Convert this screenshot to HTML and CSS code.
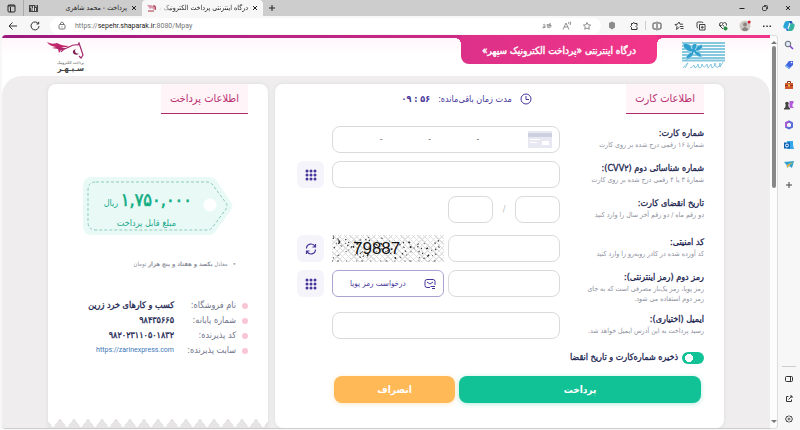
FILE: index.html
```html
<!DOCTYPE html>
<html lang="fa">
	<head>
		<meta charset="utf-8">
		<meta name="viewport" content="width=device-width,initial-scale=1">
		<title>درگاه اینترنتی پرداخت الکترونیک سپهر</title>
		<link rel="stylesheet" href="styles.css">
	</head>
	<body>
		<svg class="symbols">
			<symbol id="keypad" viewBox="0 0 12 12"><g fill="#46359a"><circle cx="2" cy="2" r="1.5"/><circle cx="6" cy="2" r="1.5"/><circle cx="10" cy="2" r="1.5"/><circle cx="2" cy="6" r="1.5"/><circle cx="6" cy="6" r="1.5"/><circle cx="10" cy="6" r="1.5"/><circle cx="2" cy="10" r="1.5"/><circle cx="6" cy="10" r="1.5"/><circle cx="10" cy="10" r="1.5"/></g></symbol>
			<symbol id="close" viewBox="0 0 8 8"><path d="M2 2l4 4M6 2l-4 4" stroke="#222" fill="none"/></symbol>
			<symbol id="star" viewBox="0 0 12 12"><path d="M6 1.8l1.3 2.7 3 .4-2.200 2 .6 3L6 8.500l-2.700 1.400.6-3-2.200-2 3-.4z"/></symbol>
		</svg>
		<div class="window">
			<header class="tabs">
				<button class="tab-menu" aria-label="Tabs"><svg width="9" height="9" viewBox="0 0 9 9"><rect x="1" y="1" width="7" height="7" rx="1" fill="none" stroke="#222"/><path d="M1 2h7M3.500 3v5" stroke="#222"/></svg></button>
				<div class="tab">
					<svg width="9" height="7" viewBox="0 0 9 7"><path d="M0 0h9v7H0z" fill="#444"/><path d="M2 1v2h1v3M4.500 1v5M6 1h2M6.500 3v3" stroke="#ddd" fill="none"/></svg>
					<span class="tab-title" dir="rtl">پرداخت - محمد شاهری</span>
					<button aria-label="Close tab"><svg width="8" height="8"><use href="#close"/></svg></button>
				</div>
				<div class="tab active">
					<svg width="9" height="8" viewBox="0 0 9 8"><path d="M0 1h4l2 1 2-1 1 5-2 0-2-2-2 1z" fill="#d99aae"/><path d="M6 2l2 0 1 4M1 7h6" stroke="#a34" fill="none"/></svg>
					<span class="tab-title faded" dir="rtl">درگاه اینترنتی پرداخت الکترونیک سپهر</span>
					<button aria-label="Close tab"><svg width="8" height="8"><use href="#close"/></svg></button>
				</div>
				<button class="new-tab" aria-label="New tab"><svg width="8" height="8" viewBox="0 0 8 8"><path d="M4 1v6M1 4h6" stroke="#222"/></svg></button>
				<div class="controls">
					<button aria-label="Minimize"><svg width="8" height="8" viewBox="0 0 8 8"><path d="M1.500 4.500h5" stroke="#222"/></svg></button>
					<button aria-label="Restore"><svg width="8" height="8" viewBox="0 0 8 8"><path d="M1.500 3.500q0-1 1-1h2q1 0 1 1v2q0 1-1 1h-2q-1 0-1-1zM3 1.500h2.500q1 0 1 1V5" stroke="#222" stroke-width=".8" fill="none"/></svg></button>
					<button aria-label="Close"><svg width="8" height="8"><use href="#close"/></svg></button>
				</div>
			</header>
			<nav class="toolbar">
				<button aria-label="Back"><svg width="10" height="10" viewBox="0 0 10 10"><path d="M9 5H1M4.500 1.500L1 5l3.500 3.500" stroke="#333" fill="none"/></svg></button>
				<button aria-label="Reload"><svg width="10" height="10" viewBox="0 0 10 10"><path d="M8.500 3A4 4 0 1 0 9 5M8.700 .8V3H6.500" stroke="#333" fill="none"/></svg></button>
				<div class="address">
					<svg width="8" height="9" viewBox="0 0 8 9"><rect x="1" y="3.500" width="6" height="4.500" rx="1" fill="none" stroke="#777"/><path d="M2.500 3.500V2q1.500-2 3 0v1.500M4 5.300v1" stroke="#777" fill="none"/></svg>
					<a href="https://sepehr.shaparak.ir:8080/Mpay">https://<b>sepehr.shaparak.ir</b>:8080/Mpay</a>
					<button aria-label="Translate"><svg width="10" height="8" viewBox="0 0 10 8"><path d="M1 3q2-1.500 2 0v3M3 4.500q-3 0-2 1.500 1 0 2-1M5 2l1 4q3-4 0-2M5 3l4-1M8 1q-1 5 1 2 1 2-2 3" stroke="#888" stroke-width=".8" fill="none"/></svg></button>
					<button aria-label="Read aloud"><svg width="10" height="10" viewBox="0 0 10 10"><path d="M1 8.500L4 2l3 6.500M2.200 6h3.600M6.500 1q1 1 0 2M8 .5q1.500 1.500 0 3.500" stroke="#777" stroke-width=".8" fill="none"/></svg></button>
					<button aria-label="Favourite"><svg width="10" height="10" fill="none" stroke="#777"><use href="#star"/></svg></button>
				</div>
				<button aria-label="Shield"><svg width="8" height="9" viewBox="0 0 8 9"><path d="M1 2l3-1.500L7 2v4.500L4 8.500 1 6.500z" fill="#8b8b8b"/></svg></button>
				<button aria-label="Extensions"><svg width="10" height="10" viewBox="0 0 10 10"><path d="M2.500 2.500H4q0-2 2 0h2v2q-2 1 0 2v2H2.500v-2q-2-1 0-2z" stroke="#333" fill="none"/></svg></button>
				<i class="divider"></i>
				<button aria-label="Split screen"><svg width="10" height="10" viewBox="0 0 10 10"><path d="M4 2H2Q1 2 1 3v4q0 1 1 1h2M6 2h2q1 0 1 1v4q0 1-1 1H6M5 .5v9" stroke="#444" fill="none"/></svg></button>
				<button aria-label="Favourites"><svg width="10" height="10" viewBox="0 0 10 10"><path d="M5.500 6L2.500 8.500l.5-3-2-2 2.500-.3L5 1l1 2.200h3M6 5.500h3.500M6.500 7.500h3" stroke="#444" fill="none"/></svg></button>
				<button aria-label="Collections"><svg width="10" height="10" viewBox="0 0 10 10"><path d="M3.500 3.500h5.500V9H3.500zM2 7Q1 7 1 5.500V2q0-1 1-1h3.500Q7 1 7 2M6.200 4.800v3M4.800 6.300h3" stroke="#444" fill="none"/></svg></button>
				<button aria-label="Performance"><svg width="10" height="10" viewBox="0 0 10 10"><path d="M5 8L1.500 4.500Q1 1.500 3.500 1.500L5 2.500l1.500-1Q9 1.500 8.500 4.500M1.500 4.500h2l1-1 1.500 2" stroke="#444" fill="none"/><circle cx="7.500" cy="7.500" r="2" fill="#2a8c42"/></svg></button>
				<button aria-label="Profile"><svg width="12" height="12" viewBox="0 0 12 12"><circle cx="6" cy="6" r="5.500" fill="#cfcac6"/><circle cx="6" cy="4.500" r="2" fill="#8a8580"/><path d="M2.500 9.500q3.500-5 7 0-3.500 3-7 0" fill="#8a8580"/><circle cx="10.200" cy="2" r="1.500" fill="#d2202f"/></svg></button>
				<button aria-label="More"><svg width="10" height="4" viewBox="0 0 10 4"><path d="M1 1.500h1.500v1.500H1zM4.300 1.500h1.500v1.500H4.300zM7.500 1.500H9v1.500H7.500z" fill="#333"/></svg></button>
				<button aria-label="Copilot"><svg width="12" height="12" viewBox="0 0 12 12"><path d="M3.500 1H7L4.500 8.500H1.500Q-.5 8 1 4q1-3 2.500-3" fill="#2aa5d8"/><path d="M8.500 11H5l2.500-7.500h3q2 .5.5 4.500-1 3-2.500 3" fill="#35b3a0"/><path d="M6 1h2.500l1.500 2.500H7z" fill="#1c50b8"/><path d="M2.500 8.500h3L5 11H4z" fill="#2f6fdc"/></svg></button>
			</nav>
			<div class="view">
				<div class="page" dir="rtl">
					<div class="top">
						<svg class="shaparak" width="43" height="28" viewBox="0 0 43 28"><path d="M0 1h43M0 4h43M0 7h43M0 10h43M0 13h43M0 16h43M0 18.500h43" stroke="#86c8dd" stroke-width="2"/><path d="M1 1q8 0 9 6-1-5 4-6 2 4-1 7 3-6 8-5-1 6-7 6 5 1 6 6-6 0-8-5-1 6-8 7 0-5 6-7Q1 9 1 1" fill="#2e9fce" stroke="#c9e9f5" stroke-width=".5"/><path d="M3 19q4-3 5-3M1 26q4-5 5-5l-3 5M8 26q3-1 4-3l1 3q2 0 3-4l1 4q3 0 3-4 2 6 5 0l1 4q2-2 3-4l1 4q3-1 3-5l1 4q4 1 4-4v4l3-5" stroke="#5bb0d2" stroke-width=".7" fill="none"/></svg>
						<h1>درگاه اینترنتی «پرداخت الکترونیک سپهر»</h1>
						<div class="sepehr">
							<svg width="37" height="18" viewBox="0 0 37 18"><path d="M0 0q5 3 10 1 5 3 12 3-4 2-8 1l5 2-5 1-2 3-1-4-6-1 4-1q-7-1-9-5" fill="#c0266c"/><path d="M10 5q5 4 12 0 5-3 9-2l1-2 1 3 3 9-2 3-2-2M18 7q-3 1-4 3" stroke="#a3286a" stroke-width="1.200" fill="none"/><path d="M29 7q-4 1-3 4 2 3 6 1l-3-1q-2-2 0-4" fill="#7d2455"/></svg>
							<small>پرداخت الکترونیک</small>
							<strong>سـپـهـر</strong>
						</div>
					</div>
					<main>
						<form class="card">
							<div class="card-head">
								<h2>اطلاعات کارت</h2>
								<p class="timer"><svg width="12" height="12" viewBox="0 0 12 12"><circle cx="6" cy="6" r="5" fill="none" stroke="#46359a"/><path d="M6 3v3.500h3" stroke="#46359a" fill="none"/></svg>مدت زمان باقی‌مانده: <b dir="ltr">۰۹ : ۵۶</b></p>
							</div>
							<div class="row">
								<label for="pan">شماره کارت:<small>شمارهٔ ۱۶ رقمی درج شده بر روی کارت</small></label>
								<div class="field pan">
									<input id="pan" dir="ltr" placeholder="-                    -                    -">
									<svg width="24" height="17" viewBox="0 0 24 17"><path d="M0 0h24v17H0z" fill="#e7e8f2"/><path d="M0 2h24v4H0z" fill="#cdd0e0"/><path d="M14 10h7v4h-7zM2 8h10v1H2zM2 11h7v1H2z" fill="#fff"/></svg>
								</div>
							</div>
							<div class="row">
								<label for="cvv">شماره شناسائی دوم (CVV۲):<small>شمارهٔ ۳ یا ۴ رقمی درج شده بر روی کارت</small></label>
								<div class="field"><input id="cvv"></div>
								<button type="button" class="square" aria-label="صفحه کلید"><svg width="12" height="12"><use href="#keypad"/></svg></button>
							</div>
							<div class="row expiry">
								<label for="month">تاریخ انقضای کارت:<small>دو رقم ماه / دو رقم آخر سال را وارد کنید</small></label>
								<div class="field"><input id="month" class="short"><span class="slash">/</span><input class="short" aria-label="سال"></div>
							</div>
							<div class="row">
								<label for="code">کد امنیتی:<small>کد آورده شده در کادر روبه‌رو را وارد کنید</small></label>
								<div class="field">
									<input id="code">
									<div class="captcha">
										<svg width="111" height="27" viewBox="0 0 111 27" preserveAspectRatio="none"><path d="M1 3l18 9 16-8 19 13 20-11 18 9 18-12M2 13l10-10 21 20 14-16 17 17 14-12 17 9 15-12" stroke="#222" stroke-width="1.500" stroke-dasharray="1 5 2 8 1 3" fill="none"/><path d="M1 23l14-7 17 8 22-13 16 13 19-18 20 19M4 8l22 12 23-17 19 7 21 14 20-6M0 26h110M1 1l13 8 28-8" stroke="#555" stroke-dasharray="1 4 2 7 1 9" fill="none"/></svg>
										<span>79887</span>
									</div>
								</div>
								<button type="button" class="square" aria-label="تصویر جدید"><svg width="12" height="12" viewBox="0 0 12 12"><path d="M1.500 5.500a4.500 4.500 0 0 1 8.500-2M10.500 1v3H7.500M10.500 6.500a4.500 4.500 0 0 1-8.500 2M1.500 11V8h3" stroke="#46359a" stroke-width="1.200" fill="none"/></svg></button>
							</div>
							<div class="row">
								<label for="pin">رمز دوم (رمز اینترنتی):<small>رمز پویا، رمز یک‌بار مصرفی است که به جای رمز دوم استفاده می شود.</small></label>
								<div class="field">
									<input id="pin">
									<button type="button" class="otp"><svg width="12" height="12" viewBox="0 0 12 12"><path d="M6 9.500H3Q1 9.500 1 7.500v-4q0-2 2-2h6q2 0 2 2V7M3 4l3 2 3-2M6.500 8.500H11M8 10.500h3" stroke="#46359a" fill="none"/></svg><span>درخواست رمز پویا</span></button>
								</div>
								<button type="button" class="square" aria-label="صفحه کلید"><svg width="12" height="12"><use href="#keypad"/></svg></button>
							</div>
							<div class="row">
								<label for="email">ایمیل (اختیاری):<small>رسید پرداخت به این آدرس ایمیل خواهد شد.</small></label>
								<div class="field"><input id="email" type="email"></div>
							</div>
							<label class="save"><input type="checkbox" checked>ذخیره شماره‌کارت و تاریخ انقضا</label>
							<div class="actions">
								<button class="pay">پرداخت</button>
								<button type="button" class="cancel">انصراف</button>
							</div>
						</form>
						<section class="card receipt">
							<div class="card-head"><h2>اطلاعات پرداخت</h2></div>
							<div class="tag">
								<svg viewBox="0 0 150 58" width="150" height="58"><path d="M9 0h117q4 0 7 3l15 22q3 4 0 8l-16 22q-2 3-6 3H9q-9 0-9-9V9q0-9 9-9" fill="#e9faf6"/><path d="M13 5h111q3 0 5 2l14 19q2 3 0 6l-14 19q-2 2-5 2H13q-8 0-8-8V13q0-8 8-8" stroke="#8fc9bb" stroke-dasharray="3 2" fill="none"/><circle cx="127" cy="28" r="6.500" fill="#fff"/></svg>
								<p class="amount"><b>۱,۷۵۰,۰۰۰</b> ریال</p>
								<p>مبلغ قابل پرداخت</p>
							</div>
							<p class="words">• &nbsp; معادل <b>یکصد و هفتاد و پنج هزار</b> تومان</p>
							<ul>
								<li><span>نام فروشگاه:</span><b>کسب و کارهای خرد زرین</b></li>
								<li><span>شماره پایانه:</span><b>۹۸۴۳۵۶۶۵</b></li>
								<li><span>کد پذیرنده:</span><b>۹۸۲۰۲۳۱۱۰۵۰۱۸۳۲</b></li>
								<li><span>سایت پذیرنده:</span><a href="https://zarinexpress.com" dir="ltr">https://zarinexpress.com</a></li>
							</ul>
						</section>
					</main>
				</div>
				<div class="scroll">
					<svg width="6" height="4" viewBox="0 0 6 4"><path d="M0 4l3-3 3 3z" fill="#777"/></svg>
					<i></i>
					<svg width="6" height="4" viewBox="0 0 6 4"><path d="M0 0l3 3 3-3z" fill="#777"/></svg>
				</div>
				<aside>
					<button aria-label="Search"><svg width="10" height="10" viewBox="0 0 10 10"><circle cx="4" cy="4" r="2.800" fill="#dbe9f5" stroke="#667"/><path d="M6 6l3 3" stroke="#7b3fd0" stroke-width="1.500"/></svg></button>
					<button aria-label="Shopping"><svg width="10" height="10" viewBox="0 0 10 10"><path d="M5 1h4v4L5 9 1 6z" fill="#4366e0"/><path d="M1 6l4 3 1-1-4-3z" fill="#77b7f5"/><circle cx="7.500" cy="2.500" r=".8" fill="#fff"/></svg></button>
					<button aria-label="Tools"><svg width="10" height="10" viewBox="0 0 10 10"><path d="M3.500 3V1.500h3V3" stroke="#7c3417" fill="none"/><path d="M1 3h8v6H1z" fill="#d2572b"/><path d="M1 5h8v1H1z" fill="#84331a"/><path d="M4 4.500h2v2H4z" fill="#f3c24c"/></svg></button>
					<button aria-label="Games"><svg width="10" height="10" viewBox="0 0 10 10"><path d="M5.500 1h4v2l-1 1v3h1v1h-4z" fill="#b35bdd"/><circle cx="3" cy="3.500" r="1.800" fill="#444"/><path d="M2 4h2l1 4H1zM0 8h6v1.500H0z" fill="#444"/></svg></button>
					<button aria-label="Microsoft 365"><svg width="10" height="10" viewBox="0 0 10 10"><path d="M5 1.500L8 3v4L5 8.500 2 7V3z" stroke="#5b6ad8" stroke-width="2" fill="none"/><path d="M2 7V3l3-1.500" stroke="#a45bd4" stroke-width="2" fill="none"/></svg></button>
					<button aria-label="Outlook"><svg width="10" height="10" viewBox="0 0 10 10"><path d="M3 1h6v4l1 4H3z" fill="#35a7e8"/><path d="M0 2.500h6v6H0z" fill="#0b62b4"/><circle cx="3" cy="5.500" r="1.500" stroke="#fff" fill="none"/></svg></button>
					<button aria-label="Drop"><svg width="10" height="10" viewBox="0 0 10 10"><path d="M0 2l10-1-2 7-3-2-2 2-.5-3z" fill="#34a1cf"/><path d="M3 5l6-3-4 4-2 2z" fill="#e6b63c"/></svg></button>
					<button aria-label="Add"><svg width="8" height="8" viewBox="0 0 8 8"><path d="M4 1v6M1 4h6" stroke="#444"/></svg></button>
					<hr>
					<button aria-label="Hide sidebar"><svg width="8" height="8" viewBox="0 0 8 8"><rect x=".5" y="1.500" width="7" height="5" rx="1" stroke="#333" fill="none"/><path d="M5.500 1.500v5" stroke="#333"/></svg></button>
					<button aria-label="Open"><svg width="8" height="8" viewBox="0 0 8 8"><path d="M3.500 1.500h-2v5h5v-2M5 1h2v2M7 1L3.500 4.500" stroke="#333" fill="none"/></svg></button>
					<button aria-label="Settings"><svg width="8" height="8" viewBox="0 0 8 8"><path d="M4 .6l1 1 1.500-.1.300 1.500.8 1-.8 1-.3 1.500L5 6.400l-1 1-1-1-1.500.1L1.200 5l-.8-1 .8-1 .3-1.500 1.500.1z" stroke="#333" stroke-width=".9" fill="none"/><circle cx="4" cy="4" r="1" stroke="#333" stroke-width=".8" fill="none"/></svg></button>
				</aside>
			</div>
		</div>
	</body>
</html>
```
FILE: styles.css
```css
:root{
	--ink:#202550;
	--purple:#46359a;
	--grey:#8d909c;
	--line:#d9d9de;
	--green:#12c297;
}
*{
	box-sizing:border-box;
}
body{
	background-color:#f7f7f7;
	color:var(--ink);
	font-family:'DejaVu Sans Condensed','DejaVu Sans',sans-serif;
	font-size:9px;
	margin:0;
}
button{
	align-items:center;
	background:none;
	border:0;
	color:inherit;
	cursor:pointer;
	display:flex;
	font-family:inherit;
	font-size:inherit;
	justify-content:center;
	padding:0;
}
svg{
	flex-shrink:0;
}
.symbols{
	display:none;
}
h1,h2,p,ul{
	margin:0;
	padding:0;
}
.window{
	display:flex;
	flex-direction:column;
	min-height:100vh;
}
.tabs{
	background-color:#cdcdcd;
	display:flex;
	height:16px;
}
.tab-menu{
	width:23px;
}
.tab{
	align-items:center;
	color:#222;
	display:flex;
	font-size:7px;
	gap:3px;
	padding:0 4px 0 5px;
	width:119px;
}.tab:not(.active){
	border-left:1px solid #aaa;
}.tab.active{
	background-color:#f7f7f7;
	border-radius:4px 4px 0 0;
	width:121px;
}
.tab-title{
	flex:1;
	overflow:hidden;
	white-space:nowrap;
}.faded{
	mask-image:linear-gradient(to left,#000 85%,transparent);
}
.new-tab{
	width:18px;
}
.controls{
	display:flex;
	gap:15px;
	margin-left:auto;
	padding-right:8px;
}
.toolbar{
	align-items:center;
	display:flex;
	height:19px;
	padding-left:2px;
}.toolbar button{
	width:22px;
}
.address{
	align-items:center;
	background-color:#fff;
	border-radius:8px;
	display:flex;
	flex:1;
	height:16px;
	margin:0 0 0 4px;
	padding:0 4px 0 8px;
}.address a{
	color:#777;
	flex:1;
	font-family:Roboto,sans-serif;
	font-size:7px;
	padding-left:9px;
	text-decoration:none;
}.address b{
	color:#222;
	font-weight:400;
}.address button{
	width:20px;
}
.divider{
	background-color:#ccc;
	height:9px;
	width:1px;
}
.view{
	display:flex;
	flex:1;
	padding:0 0 1px 2px;
}
.page{
	background-color:#fff;
	border-bottom:1px solid #ccc;
	border-radius:4px 0 0 4px;
	display:flex;
	flex:1;
	flex-direction:column;
	overflow:hidden;
}
.top{
	align-items:flex-start;
	background:linear-gradient(90deg,#9a1a7d,#f0358a) top/100% 3px no-repeat,linear-gradient(#fff5fa,#fff 20px);
	display:flex;
	height:41px;
	justify-content:space-between;
	padding:0 45px;
}
.shaparak{
	margin-top:7px;
}
h1{
	-webkit-text-stroke:.4px;
	background:linear-gradient(90deg,#dc3088,#f2368a);
	border-radius:0 0 8px 8px;
	color:#fff;
	font-size:10px;
	font-weight:400;
	height:29px;
	line-height:31px;
	margin-left:auto;
	margin-right:25px;
	position:relative;
	text-align:center;
	width:196px;
}h1::before,h1::after{
	content:'';
	height:6px;
	position:absolute;
	top:3px;
	width:6px;
}h1::before{
	background:radial-gradient(circle at 100% 100%,transparent 6px,#f2368a 6px);
	left:100%;
}h1::after{
	background:radial-gradient(circle at 0 100%,transparent 6px,#dc3088 6px);
	right:100%;
}
.sepehr{
	align-items:flex-start;
	color:#444;
	display:flex;
	flex-direction:column;
	padding-top:7px;
	width:37px;
}.sepehr small{
	font-size:4px;
	line-height:5px;
	white-space:nowrap;
}.sepehr strong{
	font-size:8px;
	line-height:8px;
}
main{
	background-color:#efedee;
	border-radius:20px 20px 0 0;
	display:flex;
	flex:1;
	gap:7px;
	padding:8px 46px 0;
}
.card{
	background-color:#fff;
	border-radius:8px;
	box-shadow:0 0 4px #ddd;
	flex:1;
	padding:0 20px 24px 22px;
}
.card-head{
	align-items:flex-start;
	display:flex;
	margin-bottom:12px;
}
h2{
	background-color:#fff4f8;
	border-bottom:1px solid #b0286f;
	color:#b9306f;
	font-size:11px;
	font-weight:400;
	height:30px;
	line-height:30px;
	padding:0 9px;
	white-space:nowrap;
}
.timer{
	align-items:center;
	color:var(--purple);
	display:flex;
	gap:8px;
	height:30px;
	margin:0 auto;
	padding-right:4px;
	padding-left:14px;
}
.row{
	display:grid;
	gap:8px;
	grid-template-columns:136px minmax(0,1fr) 27px;
	margin-bottom:8px;
}
.row label,.save,li b{
	-webkit-text-stroke:.3px;
	font-weight:400;
}
.row label{
	line-height:14px;
	white-space:nowrap;
}.row small{
	-webkit-text-stroke:0;
	color:var(--grey);
	display:block;
	font-size:7px;
	line-height:10px;
	max-width:124px;
	white-space:normal;
}
.field{
	display:flex;
	gap:4px;
	height:27px;
	position:relative;
}.field input{
	background-color:#fff;
	border:1px solid var(--line);
	border-radius:8px;
	flex:1;
	font-family:inherit;
	font-size:8px;
	height:27px;
	min-width:0;
	padding:0 8px;
}
.field .otp,.captcha{
	flex:0 0 49%;
}
.pan input{
	padding-left:47px;
	white-space:pre;
}.pan input::placeholder{
	color:#555;
}.pan svg{
	position:absolute;
	right:8px;
	top:5px;
}
.expiry{
	margin-bottom:12px;
}.expiry .field{
	gap:0;
}.field .short{
	flex:0 0 45px;
}
.slash{
	color:#bbb;
	line-height:27px;
	text-align:center;
	width:22px;
}
.square{
	background-color:#f5f4fb;
	border-radius:6px;
	height:27px;
}
.captcha{
	align-items:center;
	background:repeating-linear-gradient(45deg,transparent 0 3px,#ddd 3px 4px),repeating-linear-gradient(-45deg,#fff 0 3px,#e5e5e5 3px 4px);
	color:#111;
	display:flex;
	font-family:'Liberation Sans',sans-serif;
	font-size:17px;
	justify-content:flex-end;
	padding-left:21px;
	position:relative;
}.captcha svg{
	left:0;
	position:absolute;
	top:0;
	width:100%;
}
.otp{
	border:1px solid #aaa3cf;
	border-radius:6px;
	color:var(--purple);
	font-size:8px;
	gap:8px;
	justify-content:flex-start;
	padding:0 7px;
}.otp span{
	flex:1;
}
.save{
	align-items:center;
	display:flex;
	gap:4px;
	line-height:13px;
	margin-top:12px;
}.save input{
	appearance:none;
	background:radial-gradient(circle at 7px 50%,#fff 4px,var(--green) 4px);
	border-radius:6px;
	height:12px;
	margin:0;
	width:22px;
}
.actions{
	display:flex;
	gap:4px;
	margin:12px 3px 0 37px;
}.actions button{
	border-radius:8px;
	color:#fff;
	flex:1;
	font-size:10px;
	font-weight:700;
	height:27px;
}.actions .pay{
	background-color:var(--green);
	box-shadow:0 1px 5px #12c29755;
	flex:2;
}.actions .cancel{
	background-color:#ffb957;
	box-shadow:0 1px 5px #ffb95755;
}
.receipt{
	background:conic-gradient(from 145deg at 50% 0,#e6e4e5 70deg,transparent 0) bottom/14px 10px repeat-x,#fff;
	border-radius:8px 8px 0 0;
	flex:0 0 220px;
}
.tag{
	color:#21a98a;
	height:58px;
	margin:63px auto 0 13px;
	padding:12px 41px 0 0;
	position:relative;
	width:150px;
}.tag svg{
	left:0;
	position:absolute;
	top:0;
}.tag p{
	font-size:9px;
	line-height:18px;
	padding-right:16px;
	position:relative;
	white-space:nowrap;
}.tag .amount{
	line-height:22px;
	padding:0;
}.tag b{
	-webkit-text-stroke:.6px;
	color:#12ad84;
	font-size:18px;
	font-weight:400;
}
.words{
	color:var(--grey);
	font-size:6px;
	line-height:12px;
	margin-top:23px;
	padding-right:12px;
}
ul{
	list-style:none;
	margin-top:28px;
}
li{
	align-items:center;
	display:flex;
	line-height:15px;
	white-space:nowrap;
}li::before{
	background-color:#f8c6d5;
	border-radius:50%;
	content:'';
	height:6px;
	margin-left:6px;
	width:6px;
}li span{
	color:#70748a;
	width:62px;
}li a{
	color:#3d78b8;
	font-family:Roboto,sans-serif;
	font-size:7px;
	text-decoration:none;
}
.scroll{
	align-items:center;
	background-color:#fcfcfc;
	border:1px solid #ddd;
	border-left:0;
	border-radius:0 4px 4px 0;
	display:flex;
	flex-direction:column;
	justify-content:space-between;
	padding:4px 1px;
	width:8px;
}.scroll i{
	background-color:#888;
	border-radius:2px;
	height:142px;
	margin:2px 0 auto;
	width:4px;
}
aside{
	align-items:center;
	display:flex;
	flex-direction:column;
	width:22px;
}aside button{
	height:20px;
	width:20px;
}aside hr{
	border:0;
	border-top:1px solid #ccc;
	margin:auto 0 2px;
	width:14px;
}
```
